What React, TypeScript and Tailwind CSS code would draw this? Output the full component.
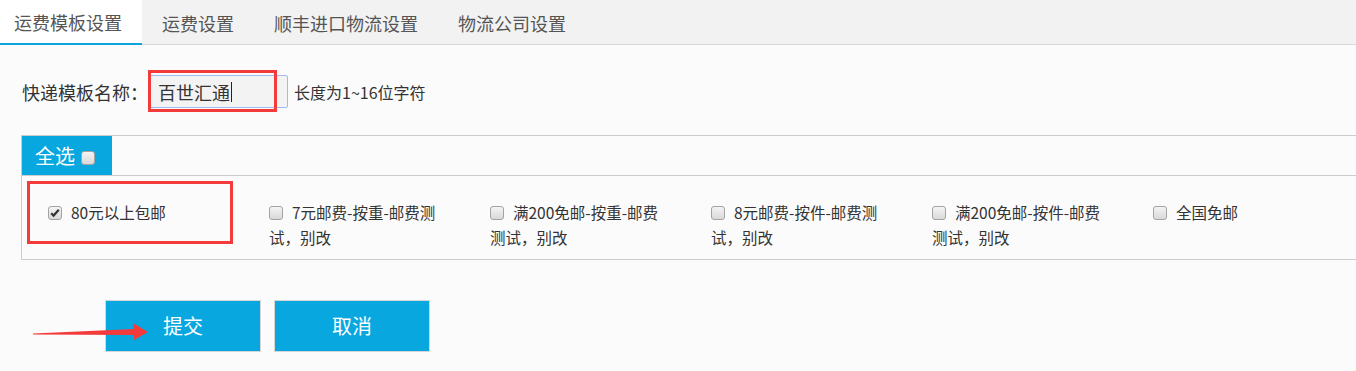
import { useState } from "react"

const tabs = ["运费模板设置", "运费设置", "顺丰进口物流设置", "物流公司设置"]

const items = [
  { id: 1, label: "80元以上包邮", checked: true },
  { id: 2, label: "7元邮费-按重-邮费测试，别改", checked: false },
  { id: 3, label: "满200免邮-按重-邮费测试，别改", checked: false },
  { id: 4, label: "8元邮费-按件-邮费测试，别改", checked: false },
  { id: 5, label: "满200免邮-按件-邮费测试，别改", checked: false },
  { id: 6, label: "全国免邮", checked: false },
]

function Check({ checked }: { checked: boolean }) {
  return (
    <span className="relative inline-block h-[14px] w-[14px] rounded-[3px] border border-[#a3a3a3] bg-gradient-to-b from-[#f4f4f4] to-[#d9d9d9] align-middle">
      {checked ? (
        <svg viewBox="0 0 14 14" className="absolute left-[-1px] top-[-1px] h-[14px] w-[14px]">
          <path d="M3.2 7.2 L5.6 9.6 L10.8 3.8" fill="none" stroke="#333" strokeWidth="2.2" />
        </svg>
      ) : null}
    </span>
  )
}

export default function App() {
  const [active] = useState(0)

  return (
    <div className="relative h-[371px] w-[1356px] overflow-hidden bg-[#fbfbfb] font-['Noto_Sans_CJK_SC',sans-serif] text-[#333]">
      <div className="flex h-[45px] bg-[#f2f2f2] shadow-[inset_0_-1px_0_#d8d8d8]">
        <div className="-ml-[6px] flex">
          {tabs.map((t, i) => (
            <div
              key={t}
              className={[
                "flex h-[45px] items-center px-5 text-[18px] leading-none text-[#555]",
                i === active ? "border-b-2 border-[#0ba4de] bg-white" : "",
              ].join(" ")}
            >
              {t}
            </div>
          ))}
        </div>
      </div>

      <div className="pl-[21px] pt-[30px]">
        <div className="flex items-center">
          <span className="ml-px w-[126px] shrink-0 text-[18px] leading-none text-[#333]">快递模板名称：</span>
          <div className="flex h-[33px] w-[140px] shrink-0 items-center rounded-[2px] border border-[#9dbdf2] bg-[#f3f3f3] pl-[9px] text-[18px] leading-none text-[#333]">
            百世汇通
            <span className="ml-px h-[20px] w-px bg-[#222]" />
          </div>
          <span className="ml-[6px] text-[16px] leading-none text-[#333]">长度为1~16位字符</span>
        </div>

        <div className="mt-[27px] border-y border-l border-[#cccccc]">
          <div className="flex h-[40px] border-b border-[#cccccc]">
            <div className="flex w-[90px] items-center bg-[#08a7e0] pl-[13px] text-[20px] leading-none text-white">
              全选
              <span className="ml-[6px]">
                <Check checked={false} />
              </span>
            </div>
          </div>
          <div className="flex h-[83px] pl-[26px] pt-[25px]">
            {items.map((it) => (
              <div key={it.id} className="mr-[45px] w-[176px] shrink-0 text-[15.5px] leading-[23px] text-[#333]">
                <span className="relative -top-[4px] mr-[9px] inline-block align-middle">
                  <Check checked={it.checked} />
                </span>
                {it.label}
              </div>
            ))}
          </div>
        </div>

        <div className="mt-[40px] flex gap-[13px] pl-[84px]">
          <button
            type="button"
            className="h-[52px] w-[156px] border border-[#d6d6d6] bg-[#08a7e0] text-[20px] leading-none text-white"
          >
            提交
          </button>
          <button
            type="button"
            className="h-[52px] w-[156px] border border-[#d6d6d6] bg-[#08a7e0] text-[20px] leading-none text-white"
          >
            取消
          </button>
        </div>
      </div>

      {/* annotations */}
      <div className="pointer-events-none absolute left-[148px] top-[70px] h-[42px] w-[129px] border-[3px] border-[#f33b3b]" />
      <div className="pointer-events-none absolute left-[27px] top-[181px] h-[63px] w-[206px] border-[3px] border-[#f33b3b]" />
      <svg className="pointer-events-none absolute left-0 top-0" width="1356" height="371">
        <polygon
          points="33,333.5 134,329 133,323 148,332 134,340 134,335 33,334.5"
          fill="#f33b3b"
        />
      </svg>
    </div>
  )
}
